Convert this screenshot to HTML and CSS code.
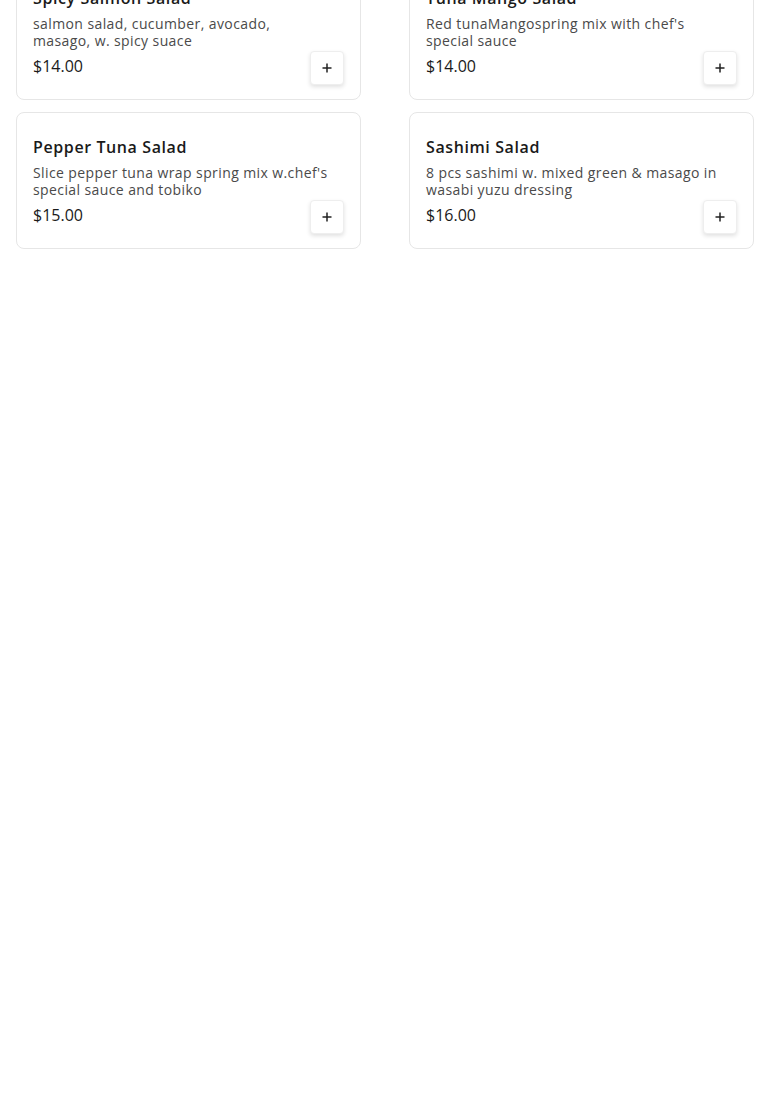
FILE: index.html
```
<!DOCTYPE html>
<html lang="en">
<head>
    <meta charset="UTF-8">
    <title>Salads</title>
    <link rel="stylesheet" href="styles.css">
</head>
<body>
    <div class="menu-grid">
        <div class="item-card">
            <h3 class="item-name">Spicy Salmon Salad</h3>
            <p class="item-desc">salmon salad, cucumber, avocado, masago, w. spicy suace</p>
            <div class="item-footer">
                <span class="item-price">$14.00</span>
                <button class="add-btn" aria-label="Add">
                    <svg width="12" height="12" viewBox="0 0 12 12"><path d="M6 1.5v9M1.5 6h9" stroke="#222" stroke-width="1.5" fill="none"/></svg>
                </button>
            </div>
        </div>
        <div class="item-card">
            <h3 class="item-name">Tuna Mango Salad</h3>
            <p class="item-desc">Red tunaMangospring mix with chef's special sauce</p>
            <div class="item-footer">
                <span class="item-price">$14.00</span>
                <button class="add-btn" aria-label="Add">
                    <svg width="12" height="12" viewBox="0 0 12 12"><path d="M6 1.5v9M1.5 6h9" stroke="#222" stroke-width="1.5" fill="none"/></svg>
                </button>
            </div>
        </div>
        <div class="item-card">
            <h3 class="item-name">Pepper Tuna Salad</h3>
            <p class="item-desc">Slice pepper tuna wrap spring mix w.chef's special sauce and tobiko</p>
            <div class="item-footer">
                <span class="item-price">$15.00</span>
                <button class="add-btn" aria-label="Add">
                    <svg width="12" height="12" viewBox="0 0 12 12"><path d="M6 1.5v9M1.5 6h9" stroke="#222" stroke-width="1.5" fill="none"/></svg>
                </button>
            </div>
        </div>
        <div class="item-card">
            <h3 class="item-name">Sashimi Salad</h3>
            <p class="item-desc">8 pcs sashimi w. mixed green &amp; masago in wasabi yuzu dressing</p>
            <div class="item-footer">
                <span class="item-price">$16.00</span>
                <button class="add-btn" aria-label="Add">
                    <svg width="12" height="12" viewBox="0 0 12 12"><path d="M6 1.5v9M1.5 6h9" stroke="#222" stroke-width="1.5" fill="none"/></svg>
                </button>
            </div>
        </div>
    </div>
</body>
</html>
```

FILE: styles.css
```
body {
    margin: 0;
    background: #fff;
    font-family: "Open Sans", Arial, sans-serif;
    color: #1a1a1a;
}
.menu-grid {
    display: grid;
    grid-template-columns: 1fr 1fr;
    column-gap: 48px;
    row-gap: 12px;
    padding: 0 16px;
    margin-top: -37px;
}
.item-card {
    border: 1px solid #e6e6e6;
    border-radius: 8px;
    padding: 22px 16px 14px;
    background: #fff;
}
.item-name {
    margin: 0;
    font-size: 16px;
    line-height: 24px;
    font-weight: 600;
    letter-spacing: 0.6px;
    color: #1a1a1a;
}
.item-desc {
    margin: 5px 0 0;
    max-width: 298px;
    font-size: 14px;
    line-height: 17px;
    letter-spacing: 0.4px;
    color: #4a4a4a;
    height: 34px;
}
.item-footer {
    display: flex;
    justify-content: space-between;
    align-items: center;
    margin-top: 2px;
}
.item-price {
    font-size: 16px;
    color: #1a1a1a;
    margin-top: -5px;
}
.add-btn {
    width: 34px;
    height: 34px;
    padding: 0;
    border: 1px solid #eee;
    border-radius: 4px;
    background: #fff;
    box-shadow: 0 2px 4px rgba(0, 0, 0, 0.12);
    display: flex;
    align-items: center;
    justify-content: center;
    cursor: pointer;
}
```
